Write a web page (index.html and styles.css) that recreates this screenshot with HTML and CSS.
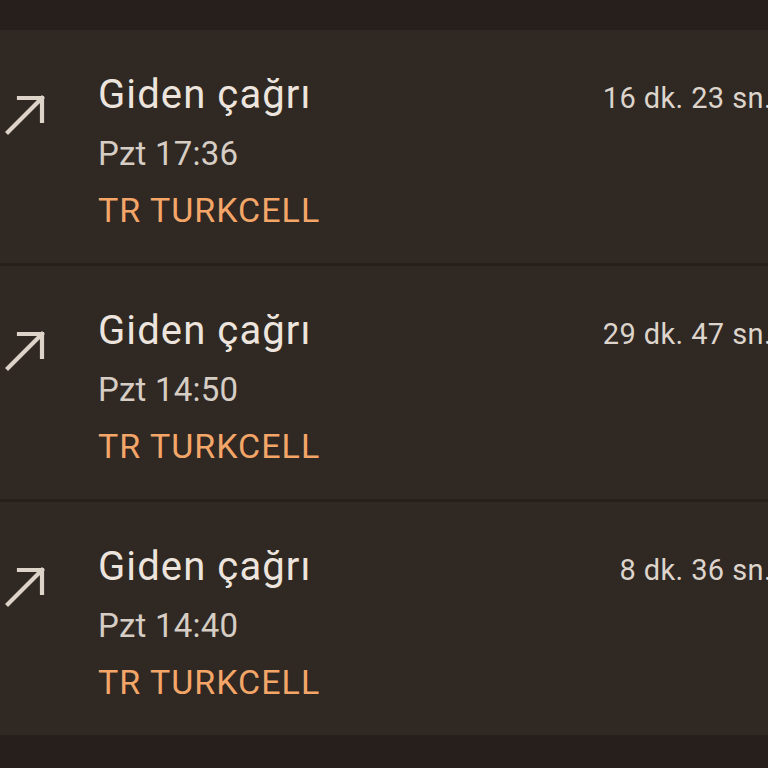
FILE: index.html
```html
<!DOCTYPE html>
<html lang="tr">
<head>
    <meta charset="UTF-8">
    <meta name="viewport" content="width=device-width, initial-scale=1.0">
    <title>Arama geçmişi</title>
    <link rel="stylesheet" href="styles.css">
</head>
<body>
    <div class="call-list">
        <div class="call-card">
            <div class="call-icon">
                <svg viewBox="0 0 40 40" width="40" height="40">
                    <path d="M3 37 L37 3 M14 3 H37 V26" fill="none" stroke="#ddd3c9" stroke-width="4.2" stroke-linecap="square"/>
                </svg>
            </div>
            <div class="call-info">
                <div class="call-head">
                    <span class="call-type">Giden çağrı</span>
                    <span class="call-duration">16 dk. 23 sn.</span>
                </div>
                <div class="call-time">Pzt 17:36</div>
                <div class="call-sim">TR TURKCELL</div>
            </div>
        </div>
        <div class="call-card">
            <div class="call-icon">
                <svg viewBox="0 0 40 40" width="40" height="40">
                    <path d="M3 37 L37 3 M14 3 H37 V26" fill="none" stroke="#ddd3c9" stroke-width="4.2" stroke-linecap="square"/>
                </svg>
            </div>
            <div class="call-info">
                <div class="call-head">
                    <span class="call-type">Giden çağrı</span>
                    <span class="call-duration">29 dk. 47 sn.</span>
                </div>
                <div class="call-time">Pzt 14:50</div>
                <div class="call-sim">TR TURKCELL</div>
            </div>
        </div>
        <div class="call-card">
            <div class="call-icon">
                <svg viewBox="0 0 40 40" width="40" height="40">
                    <path d="M3 37 L37 3 M14 3 H37 V26" fill="none" stroke="#ddd3c9" stroke-width="4.2" stroke-linecap="square"/>
                </svg>
            </div>
            <div class="call-info">
                <div class="call-head">
                    <span class="call-type">Giden çağrı</span>
                    <span class="call-duration">8 dk. 36 sn.</span>
                </div>
                <div class="call-time">Pzt 14:40</div>
                <div class="call-sim">TR TURKCELL</div>
            </div>
        </div>
    </div>
</body>
</html>
```

FILE: styles.css
```css
body {
    margin: 0;
    padding: 0;
    background-color: #261f1b;
    font-family: Roboto, "Noto Sans", sans-serif;
    overflow: hidden;
}
.call-list {
    display: flex;
    flex-direction: column;
    gap: 3px;
    padding-top: 30px;
}
.call-card {
    display: flex;
    height: 233px;
    box-sizing: border-box;
    padding-top: 37px;
    background-color: #2f2823;
}
.call-icon {
    width: 93px;
    padding-left: 5px;
    padding-top: 28px;
}
.call-icon svg {
    display: block;
}
.call-info {
    flex: 1;
}
.call-head {
    display: flex;
    justify-content: space-between;
    align-items: baseline;
    margin-right: -4px;
}
.call-type {
    font-size: 40px;
    line-height: 56px;
    letter-spacing: 1.1px;
    color: #ede5dd;
}
.call-duration {
    font-size: 29px;
    letter-spacing: 0.4px;
    color: #ddd4cb;
}
.call-time {
    font-size: 33px;
    line-height: 62px;
    letter-spacing: 0.2px;
    color: #d6cdc4;
}
.call-sim {
    font-size: 34px;
    line-height: 50px;
    letter-spacing: 1px;
    color: #f4a669;
}
```
